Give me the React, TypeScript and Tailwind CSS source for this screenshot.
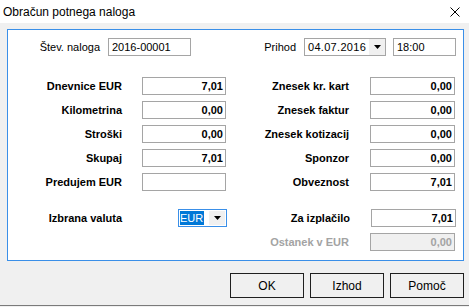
import React from "react";

const font = { fontFamily: '"Liberation Sans", Arial, sans-serif' };

const Arrow = () => (
  <svg width="7" height="4" viewBox="0 0 7 4">
    <path d="M0 0h7L3.5 4z" fill="#000" />
  </svg>
);

const Box = ({ value, disabled }: { value?: string; disabled?: boolean }) => (
  <div
    className={
      "h-[18px] w-full border border-[#a5a5a5] flex items-center justify-end pr-[2px] text-[11px] font-bold " +
      (disabled ? "bg-[#f0f0f0] text-[#a3a3a3]" : "bg-white text-black")
    }
  >
    {value}
  </div>
);

const Row = ({
  left,
  leftValue,
  right,
  rightValue,
}: {
  left: string;
  leftValue: string;
  right: string;
  rightValue: string;
}) => (
  <div className="flex items-center h-[18px]">
    <div className="w-[114px] text-right text-[11px] font-bold">{left}</div>
    <div className="w-[84px] ml-[20px]">
      <Box value={leftValue} />
    </div>
    <div className="w-[120px] ml-[3px] text-right text-[11px] font-bold">{right}</div>
    <div className="w-[85px] ml-[21px]">
      <Box value={rightValue} />
    </div>
  </div>
);

export default function App() {
  const rows = [
    ["Dnevnice EUR", "7,01", "Znesek kr. kart", "0,00"],
    ["Kilometrina", "0,00", "Znesek faktur", "0,00"],
    ["Stroški", "0,00", "Znesek kotizacij", "0,00"],
    ["Skupaj", "7,01", "Sponzor", "0,00"],
    ["Predujem EUR", "", "Obveznost", "7,01"],
  ];

  return (
    <div className="w-[469px] h-[307px] flex flex-col bg-[#f0f0f0] text-black" style={font}>
      {/* title bar */}
      <div className="h-[23px] bg-white flex items-center justify-between pl-[3px] pr-[9px]">
        <span className="text-[12px]">Obračun potnega naloga</span>
        <svg width="10" height="10" viewBox="0 0 10 10">
          <path d="M0.5 0.5l9 9M9.5 0.5l-9 9" stroke="#000" strokeWidth="1" />
        </svg>
      </div>

      <div className="flex-1 flex flex-col pl-[7px] pr-[5px] pt-[6px]">
        {/* main panel */}
        <div className="h-[232px] border border-[#3a8fe8] bg-white pt-[8px] px-0">
          <div className="flex items-center h-[18px] text-[11px]">
            <div className="w-[92px] text-right">Štev. naloga</div>
            <div className="w-[83px] h-[18px] ml-[8px] border border-[#a5a5a5] flex items-center pl-[3px]">
              2016-00001
            </div>
            <div className="flex-1 text-right pr-[8px]">Prihod</div>
            <div className="w-[82px] h-[18px] border border-[#a5a5a5] flex items-center justify-between">
              <span className="pl-[3px] tracking-[0.3px]">04.07.2016</span>
              <div className="w-[16px] h-full bg-[#f0f0f0] flex items-center justify-center">
                <Arrow />
              </div>
            </div>
            <div className="w-[63px] h-[18px] ml-[7px] mr-[7px] border border-[#a5a5a5] flex items-center pl-[3px]">
              18:00
            </div>
          </div>

          <div className="flex flex-col gap-[6px] mt-[21px]">
            {rows.map((r) => (
              <Row key={r[0]} left={r[0]} leftValue={r[1]} right={r[2]} rightValue={r[3]} />
            ))}
          </div>

          <div className="flex flex-col gap-[6px] mt-[18px]">
            <div className="flex items-center h-[18px]">
              <div className="w-[114px] text-right text-[11px] font-bold">Izbrana valuta</div>
              <div className="w-[49px] h-[18px] ml-[56px] border border-[#3a8fe8] flex items-center justify-between p-[1px]">
                <span className="h-full bg-[#0078d7] text-white text-[11px] flex items-center pr-[1px]">EUR</span>
                <div className="w-[16px] h-full bg-[#f0f0f0] flex items-center justify-center">
                  <Arrow />
                </div>
              </div>
              <div className="w-[120px] ml-[3px] text-right text-[11px] font-bold">Za izplačilo</div>
              <div className="w-[85px] ml-[21px]">
                <Box value="7,01" />
              </div>
            </div>
            <div className="flex items-center h-[18px]">
              <div className="w-[120px] ml-[221px] text-right text-[11px] font-bold text-[#a3a3a3]">
                Ostanek v EUR
              </div>
              <div className="w-[85px] ml-[21px]">
                <Box value="0,00" disabled />
              </div>
            </div>
          </div>
        </div>

        {/* buttons */}
        <div className="flex justify-end gap-[6px] mt-[12px] text-[12px]">
          {["OK", "Izhod", "Pomoč"].map((b) => (
            <button
              key={b}
              className="w-[74px] h-[25px] border border-[#1f1f1f] bg-[#f0f0f0] flex items-center justify-center"
            >
              {b}
            </button>
          ))}
        </div>
      </div>
      <div className="h-[1px] bg-[#7a7a7a]" />
      <div className="h-[1px] bg-[#f0f0f0]" />
    </div>
  );
}
